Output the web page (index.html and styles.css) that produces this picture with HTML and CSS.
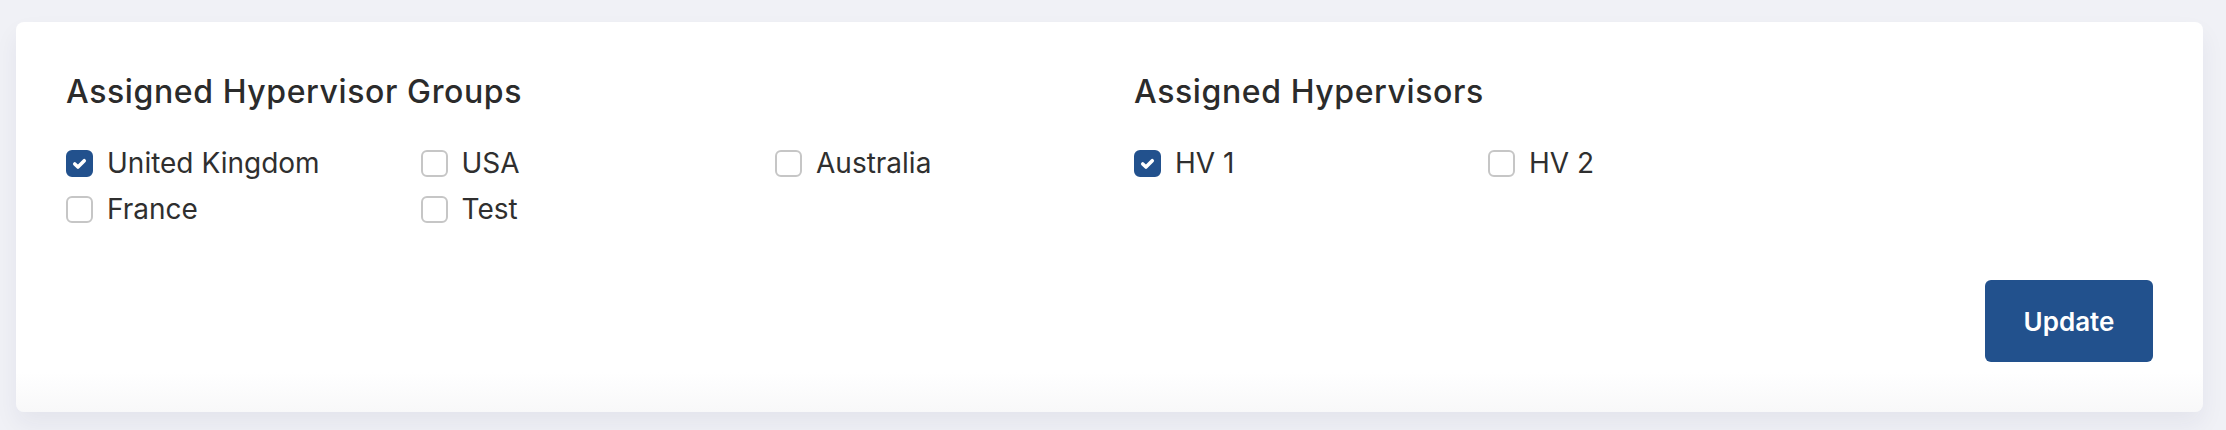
FILE: index.html
```html
<!DOCTYPE html>
<html lang="en">
<head>
<meta charset="utf-8">
<title>Assigned Hypervisors</title>
<link rel="stylesheet" href="styles.css">
</head>
<body>
<div class="page">
  <div class="card">
    <div class="sections">
      <section class="section">
        <h2 class="section-title">Assigned Hypervisor Groups</h2>
        <div class="options options-3">
          <label class="option"><span class="box checked"><svg viewBox="0 0 16 16" width="16" height="16"><path d="M4 8.4l2.7 2.6L12 5.6" fill="none" stroke="#fff" stroke-width="3" stroke-linecap="round" stroke-linejoin="round"/></svg></span><span class="label">United Kingdom</span></label>
          <label class="option"><span class="box"></span><span class="label">USA</span></label>
          <label class="option"><span class="box"></span><span class="label">Australia</span></label>
          <label class="option"><span class="box"></span><span class="label">France</span></label>
          <label class="option"><span class="box"></span><span class="label">Test</span></label>
        </div>
      </section>
      <section class="section">
        <h2 class="section-title">Assigned Hypervisors</h2>
        <div class="options options-2">
          <label class="option"><span class="box checked"><svg viewBox="0 0 16 16" width="16" height="16"><path d="M4 8.4l2.7 2.6L12 5.6" fill="none" stroke="#fff" stroke-width="3" stroke-linecap="round" stroke-linejoin="round"/></svg></span><span class="label">HV 1</span></label>
          <label class="option"><span class="box"></span><span class="label">HV 2</span></label>
        </div>
      </section>
    </div>
    <div class="actions">
      <button class="btn-primary" type="button">Update</button>
    </div>
  </div>
</div>
</body>
</html>
```
FILE: styles.css
```css
html, body {
  margin: 0;
  padding: 0;
}
body {
  background: #f0f1f6;
  font-family: Inter, "Noto Sans", sans-serif;
  color: #2e2e2e;
  height: 430px;
  overflow: hidden;
}
.page {
  padding: 22px 23px 18px 16px;
}
.card {
  background: linear-gradient(to bottom, #ffffff calc(100% - 40px), #f8f8f9 100%);
  border-radius: 8px;
  padding: 52px 50px 50px 50px;
  box-shadow: 0 12px 24px rgba(30, 35, 80, 0.06);
}
.sections {
  display: grid;
  grid-template-columns: 1068px 1fr;
}
.section-title {
  margin: 0 0 33px 0;
  font-size: 32px;
  line-height: 36px;
  font-weight: 500;
  color: #2b2b2b;
  letter-spacing: 0.6px;
}
.options {
  display: grid;
  row-gap: 6px;
}
.options-3 {
  grid-template-columns: repeat(3, 354.5px);
}
.options-2 {
  grid-template-columns: repeat(2, 354px);
}
.option {
  display: flex;
  align-items: center;
  gap: 14px;
  height: 40px;
  font-size: 28px;
  line-height: 40px;
  color: #2f2f2f;
}
.box {
  width: 27px;
  height: 27px;
  box-sizing: border-box;
  border: 2px solid #c6c6c6;
  border-radius: 6px;
  background: #fff;
  display: flex;
  align-items: center;
  justify-content: center;
  flex: none;
}
.box.checked {
  background: #22518d;
  border-color: #22518d;
}
.box svg {
  width: 19px;
  height: 19px;
}
.actions {
  display: flex;
  justify-content: flex-end;
  margin-top: 51px;
}
.btn-primary {
  width: 168px;
  height: 82px;
  border: none;
  border-radius: 6px;
  background: #22518d;
  color: #fff;
  font-family: Inter, "Noto Sans", sans-serif;
  font-size: 26px;
  font-weight: 600;
  cursor: pointer;
}
```
